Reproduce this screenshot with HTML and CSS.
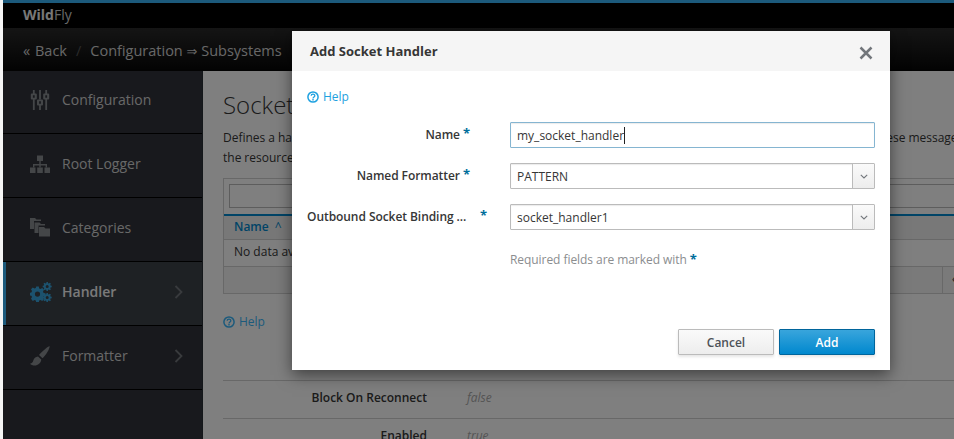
FILE: index.html
```html
<!DOCTYPE html>
<html lang="en">
<head>
<meta charset="utf-8">
<title>WildFly - Add Socket Handler</title>
<link rel="stylesheet" href="styles.css">
</head>
<body>
<div class="page">
  <header class="brandbar"><span class="brand"><b>Wild</b>Fly</span></header>
  <nav class="crumbs">
    <span class="back"><span class="dbl">«</span> Back</span>
    <span class="sep">/</span>
    <span>Configuration <span class="arrow">⇒</span> Subsystems</span>
  </nav>
  <div class="main">
    <aside class="sidebar">
      <div class="item">
        <svg class="icon" viewBox="0 0 20 20"><path d="M2.900 0h1.800v4h-1.800zM2.900 9h1.800v11h-1.800zM9.100 0h1.800v9.500h-1.800zM9.100 15h1.800v5h-1.800zM15.300 0h1.800v4h-1.800zM15.300 9h1.800v11h-1.800z"/><path fill-rule="evenodd" d="M1.800 3.500h4a1 1 0 0 1 1 1v4a1 1 0 0 1-1 1h-4a1 1 0 0 1-1-1v-4a1 1 0 0 1 1-1zM2.900 5.300v2.400h1.800V5.300zM8 9.500h4a1 1 0 0 1 1 1v4a1 1 0 0 1-1 1H8a1 1 0 0 1-1-1v-4a1 1 0 0 1 1-1zM9.100 11.300v2.400h1.800v-2.400zM14.200 3.500h4a1 1 0 0 1 1 1v4a1 1 0 0 1-1 1h-4a1 1 0 0 1-1-1v-4a1 1 0 0 1 1-1zM15.300 5.300v2.400h1.800V5.300z"/></svg>
        <span class="label">Configuration</span>
      </div>
      <div class="item">
        <svg class="icon" viewBox="0 0 20 20"><path d="M7 1.500h6v5.500h-6zM0 13.500h5.500v5.500H0zM7.200 13.500h5.600v5.500H7.200zM14.500 13.500H20v5.500h-5.500z"/><path d="M9.300 7h1.400v3h6.300v3.500h-1.400v-2.100h-4.900v2.100H9.300v-2.100H4.400v2.100H3V10h6.300z"/></svg>
        <span class="label">Root Logger</span>
      </div>
      <div class="item">
        <svg class="icon" viewBox="0 0 20 20"><path d="M0 0h5l1.500 1.500H11V3H4v8H0z"/><path d="M4.500 4.500h5L11 6h4v1.500H8.500V15h-4z"/><path d="M9 9h5l1.500 1.500H20V18.500H9z"/></svg>
        <span class="label">Categories</span>
      </div>
      <div class="item active">
        <svg class="icon gears" viewBox="0 0 22 20"><path fill-rule="evenodd" d="M6.200 4.500h2.600l.4 1.900 1.300.6 1.700-1 1.800 1.800-1 1.700.6 1.400 1.900.4v2.500l-1.900.4-.6 1.400 1 1.700-1.800 1.800-1.700-1-1.300.5-.4 2H6.200l-.4-2-1.300-.5-1.700 1L1 16.800l1-1.700-.6-1.400-1.900-.4v-2.500l1.900-.4.600-1.400-1-1.700 1.800-1.800 1.700 1 1.300-.6zM7.500 9.500a2.600 2.600 0 1 0 0 5.200 2.600 2.600 0 0 0 0-5.200z"/><path fill-rule="evenodd" d="M16.500 0h1.400l.2 1.200.8.300 1-.7 1 1-.7 1 .3.800 1.200.2v1.400l-1.200.2-.3.800.7 1-1 1-1-.7-.8.3-.2 1.200h-1.400l-.2-1.200-.8-.3-1 .7-1-1 .7-1-.3-.8-1.200-.2V3.800l1.200-.2.300-.8-.7-1 1-1 1 .7.800-.3zM17.200 3a1.500 1.500 0 1 0 0 3 1.500 1.500 0 0 0 0-3z"/><path fill-rule="evenodd" d="M16.500 11h1.400l.2 1.200.8.300 1-.7 1 1-.7 1 .3.800 1.200.2v1.400l-1.200.2-.3.800.7 1-1 1-1-.7-.8.3-.2 1.200h-1.400l-.2-1.200-.8-.3-1 .7-1-1 .7-1-.3-.8-1.200-.2v-1.400l1.200-.2.300-.8-.7-1 1-1 1 .7.800-.3zM17.200 14a1.500 1.500 0 1 0 0 3 1.500 1.500 0 0 0 0-3z"/></svg>
        <span class="label">Handler</span>
        <svg class="chev" viewBox="0 0 10 14"><path d="M1.500 1l6 6-6 6" fill="none" stroke="currentColor" stroke-width="1.800"/></svg>
      </div>
      <div class="item">
        <svg class="icon" viewBox="0 0 20 20"><path d="M19.500 0c.6 2.500-3.500 9-7 12.200L9 9C11.500 6 16.500 1.500 19.500 0z"/><path d="M8 10.500l3.300 3c-.3 3.500-3.500 6-6.500 6-2 0-3.800-.7-4.800-1.800 2.200-.3 2.800-1.500 3.300-3.200.6-2.200 2.200-3.700 4.700-4z"/></svg>
        <span class="label">Formatter</span>
        <svg class="chev" viewBox="0 0 10 14"><path d="M1.500 1l6 6-6 6" fill="none" stroke="currentColor" stroke-width="1.800"/></svg>
      </div>
    </aside>
    <main class="content">
      <h1 class="title">Socket Handler</h1>
      <p class="desc">Defines a handler which writes log records over a socket connection to a remote server, using a formatter to prepare these messages<br>the resource</p>
      <section class="table">
        <div class="filter"><div class="filter-box"></div></div>
        <div class="thead"><span class="th">Name <span class="sort">^</span></span></div>
        <div class="trow">No data available in table</div>
        <div class="tfoot"><span class="pager"><span class="pager-arrow">‹</span></span></div>
      </section>
      <div class="help outer">
        <svg class="help-icon" viewBox="0 0 12 12"><circle cx="6" cy="6" r="5.100" fill="none" stroke="currentColor" stroke-width="1.500"/><path d="M4.200 4.800c0-2.300 3.600-2.300 3.600-.1 0 1.300-1.800 1.200-1.800 2.700" fill="none" stroke="currentColor" stroke-width="1.300"/><path d="M5.300 8.100h1.400v1.400H5.300z" fill="currentColor"/></svg>
        <span>Help</span>
      </div>
      <div class="attrs">
        <div class="attr"><span class="attr-name">Block On Reconnect</span><span class="attr-value">false</span></div>
        <div class="attr"><span class="attr-name">Enabled</span><span class="attr-value">true</span></div>
      </div>
    </main>
  </div>
  <div class="backdrop"></div>
  <div class="modal">
    <div class="modal-head">
      <span class="modal-title">Add Socket Handler</span>
      <svg class="close" viewBox="0 0 14 14"><path d="M1.500 1.500l11 11M12.500 1.500l-11 11" fill="none" stroke="currentColor" stroke-width="2.500"/></svg>
    </div>
    <div class="modal-body">
      <div class="help">
        <svg class="help-icon" viewBox="0 0 12 12"><circle cx="6" cy="6" r="5.100" fill="none" stroke="currentColor" stroke-width="1.500"/><path d="M4.200 4.800c0-2.300 3.600-2.300 3.600-.1 0 1.300-1.800 1.200-1.800 2.700" fill="none" stroke="currentColor" stroke-width="1.300"/><path d="M5.300 8.100h1.400v1.400H5.300z" fill="currentColor"/></svg>
        <span>Help</span>
      </div>
      <form class="form">
        <div class="row">
          <div class="row-label tight"><span>Name</span><span class="star">*</span></div>
          <div class="field focus"><span class="value">my_socket_handler</span><span class="caret"></span></div>
        </div>
        <div class="row">
          <div class="row-label tight"><span>Named Formatter</span><span class="star">*</span></div>
          <div class="field"><span class="value">PATTERN</span><span class="drop"><svg class="drop-icon" viewBox="0 0 8 5"><path d="M.8.800L4 4l3.200-3.200" fill="none" stroke="currentColor" stroke-width="1.100"/></svg></span></div>
        </div>
        <div class="row">
          <div class="row-label wide"><span>Outbound Socket Binding ...</span><span class="star">*</span></div>
          <div class="field"><span class="value">socket_handler1</span><span class="drop"><svg class="drop-icon" viewBox="0 0 8 5"><path d="M.8.800L4 4l3.200-3.200" fill="none" stroke="currentColor" stroke-width="1.100"/></svg></span></div>
        </div>
        <div class="row note-row">
          <div class="note-spacer"></div>
          <div class="note">Required fields are marked with <span class="star">*</span></div>
        </div>
      </form>
    </div>
    <div class="modal-foot">
      <button class="btn" type="button">Cancel</button>
      <button class="btn primary" type="button">Add</button>
    </div>
  </div>
</div>
</body>
</html>
```
FILE: styles.css
```css
* { box-sizing: border-box; }
html, body { margin: 0; padding: 0; height: 100%; }
body {
  background: #f5f5f5;
  font-family: "Open Sans", sans-serif;
  font-size: 12px;
  overflow: hidden;
}
.page {
  position: relative;
  margin-left: 3px;
  height: 439px;
  overflow: hidden;
  background: #fff;
}
.brandbar {
  height: 28px;
  background: #000;
  border-top: 3px solid #39b5f8;
  padding: 2px 0 0 20px;
  color: #d1d1d1;
  font-size: 14px;
  line-height: 20px;
}
.brandbar b { font-weight: 700; color: #f0f0f0; }
.crumbs {
  height: 43px;
  background: linear-gradient(#2a2a2a, #060606);
  display: flex;
  align-items: center;
  gap: 8px;
  padding: 2px 0 0 20px;
  color: #d1d1d1;
  font-size: 14.5px;
}
.dbl { margin-right: 1px; }
.sep { color: #555; margin: 0 1px; }
.arrow { font-family: "DejaVu Sans", sans-serif; font-size: 13px; }
.main { display: flex; height: 368px; }
.sidebar {
  width: 200px;
  flex: none;
  background: #30323a;
  border-right: 1px solid #292e34;
}
.item {
  height: 64px;
  display: flex;
  align-items: center;
  padding: 0 0 4px 27px;
  border-bottom: 1px solid #000;
  color: #d1d1d1;
  font-size: 14px;
  position: relative;
}
.item:first-child { height: 63px; padding-bottom: 5px; }
.item.active {
  background: #3c4248;
  color: #f5f5f5;
  font-weight: 600;
  box-shadow: inset 3px 0 0 #39b5f8;
}
.icon { width: 20px; height: 20px; fill: #888c90; margin-right: 12px; flex: none; }
.gears { width: 22px; margin-right: 10px; fill: #39a5dc; }
.label { flex: 1; }
.chev { width: 10px; height: 14px; margin-right: 18px; color: #72767b; }
.content { width: 760px; flex: none; padding: 19px 0 0 20px; color: #363636; }
.title { margin: 0; font-size: 24px; font-weight: 300; line-height: 30px; color: #363636; }
.desc { margin: 8px 0 0; font-size: 12px; line-height: 20px; white-space: nowrap; word-spacing: -.15px; }
.table {
  margin-top: 10px;
  border: 1px solid #d1d1d1;
  width: 760px;
}
.filter { height: 35px; padding: 5px; background: #fff; }
.filter-box { height: 24px; border: 1px solid #bbb; }
.thead {
  height: 26px;
  background: #f0f0f0;
  border-top: 2px solid #0088ce;
  border-bottom: 1px solid #d1d1d1;
  padding: 1px 10px 0;
  color: #0088ce;
  font-weight: 600;
  line-height: 20px;
}
.sort { font-weight: 400; margin-left: 3px; }
.trow { height: 27px; padding: 0 10px; line-height: 24px; border-bottom: 1px solid #d1d1d1; }
.tfoot { height: 26px; position: relative; background: #f5f5f5; }
.pager { position: absolute; left: 718px; top: 0; bottom: 0; border-left: 1px solid #d1d1d1; padding-left: 9px; line-height: 24px; }
.help { display: flex; align-items: center; gap: 4px; color: #1ea1e0; font-size: 12px; line-height: 16px; }
.help.outer { margin-top: 20px; color: #39b5f8; }
.help-icon { width: 12px; height: 12px; flex: none; }
.attrs { margin-top: 50px; }
.attr {
  height: 38px;
  border-top: 1px solid #d1d1d1;
  display: flex;
  align-items: center;
  padding-bottom: 4px;
  font-size: 12px;
}
.attr-name { width: 204px; text-align: right; font-weight: 600; color: #363636; }
.attr-value { margin-left: 40px; font-style: italic; color: #aaa; }
.backdrop { position: absolute; inset: 0; background: rgba(0, 0, 0, .5); }
.modal {
  position: absolute;
  left: 289px;
  top: 31px;
  width: 598px;
  height: 339px;
  background: #fff;
  box-shadow: 0 5px 15px rgba(0, 0, 0, .5);
  display: flex;
  flex-direction: column;
}
.modal-head {
  height: 40px;
  flex: none;
  background: #f5f5f5;
  display: flex;
  align-items: center;
  justify-content: space-between;
  padding: 0 17px 0 18px;
}
.modal-title { font-size: 13px; font-weight: 700; color: #363636; }
.close { width: 14px; height: 14px; color: #72767b; margin-top: 3px; }
.modal-body { flex: 1; padding: 18px 15px 0; }
.form { display: flex; flex-direction: column; gap: 15px; margin-top: 17px; }
.row { display: flex; align-items: flex-start; gap: 23px; }
.row-label {
  width: 180px;
  flex: none;
  display: flex;
  justify-content: flex-end;
  font-weight: 600;
  color: #363636;
  font-size: 12px;
  letter-spacing: -.06px;
  line-height: 16px;
  padding-top: 5px;
}
.row-label.tight { padding-right: 17px; gap: 3px; }
.row-label.wide { justify-content: space-between; white-space: nowrap; }
.star { color: #006e9c; font-weight: 700; font-size: 13px; line-height: 10px; }
.row-label .star { position: relative; top: 1px; }
.field {
  flex: 1;
  height: 26px;
  border: 1px solid #bbb;
  display: flex;
  align-items: center;
  padding-left: 6px;
  font-size: 12px;
  color: #363636;
  box-shadow: inset 0 1px 1px rgba(3, 3, 3, .08);
  border-radius: 1px;
}
.field.focus { border-color: #85b5d1; }
.value { white-space: nowrap; }
.caret { width: 1px; height: 17px; background: #222; margin-left: 0; }
.drop {
  margin-left: auto;
  width: 22px;
  height: 24px;
  background: linear-gradient(#fafafa, #ededed);
  border-left: 1px solid #bbb;
  display: flex;
  align-items: center;
  justify-content: center;
  color: #72767b;
}
.drop-icon { width: 8px; height: 5px; }
.note-row { margin-top: 7px; }
.note-spacer { width: 180px; flex: none; }
.note { color: #8b8d8f; font-size: 12px; letter-spacing: -.06px; line-height: 16px; }
.modal-foot {
  flex: none;
  display: flex;
  justify-content: flex-end;
  gap: 5px;
  padding: 0 15px 15px;
}
.btn {
  width: 96px;
  height: 26px;
  border: 1px solid #bbb;
  border-radius: 1px;
  background: linear-gradient(#fafafa, #ededed);
  color: #4d5258;
  font-family: "Open Sans", sans-serif;
  font-size: 12px;
  font-weight: 600;
  box-shadow: 0 2px 3px rgba(3, 3, 3, .1);
  padding: 0;
}
.btn.primary {
  background: linear-gradient(#39a5dc, #0088ce);
  border-color: #00659c;
  color: #fff;
}
```
